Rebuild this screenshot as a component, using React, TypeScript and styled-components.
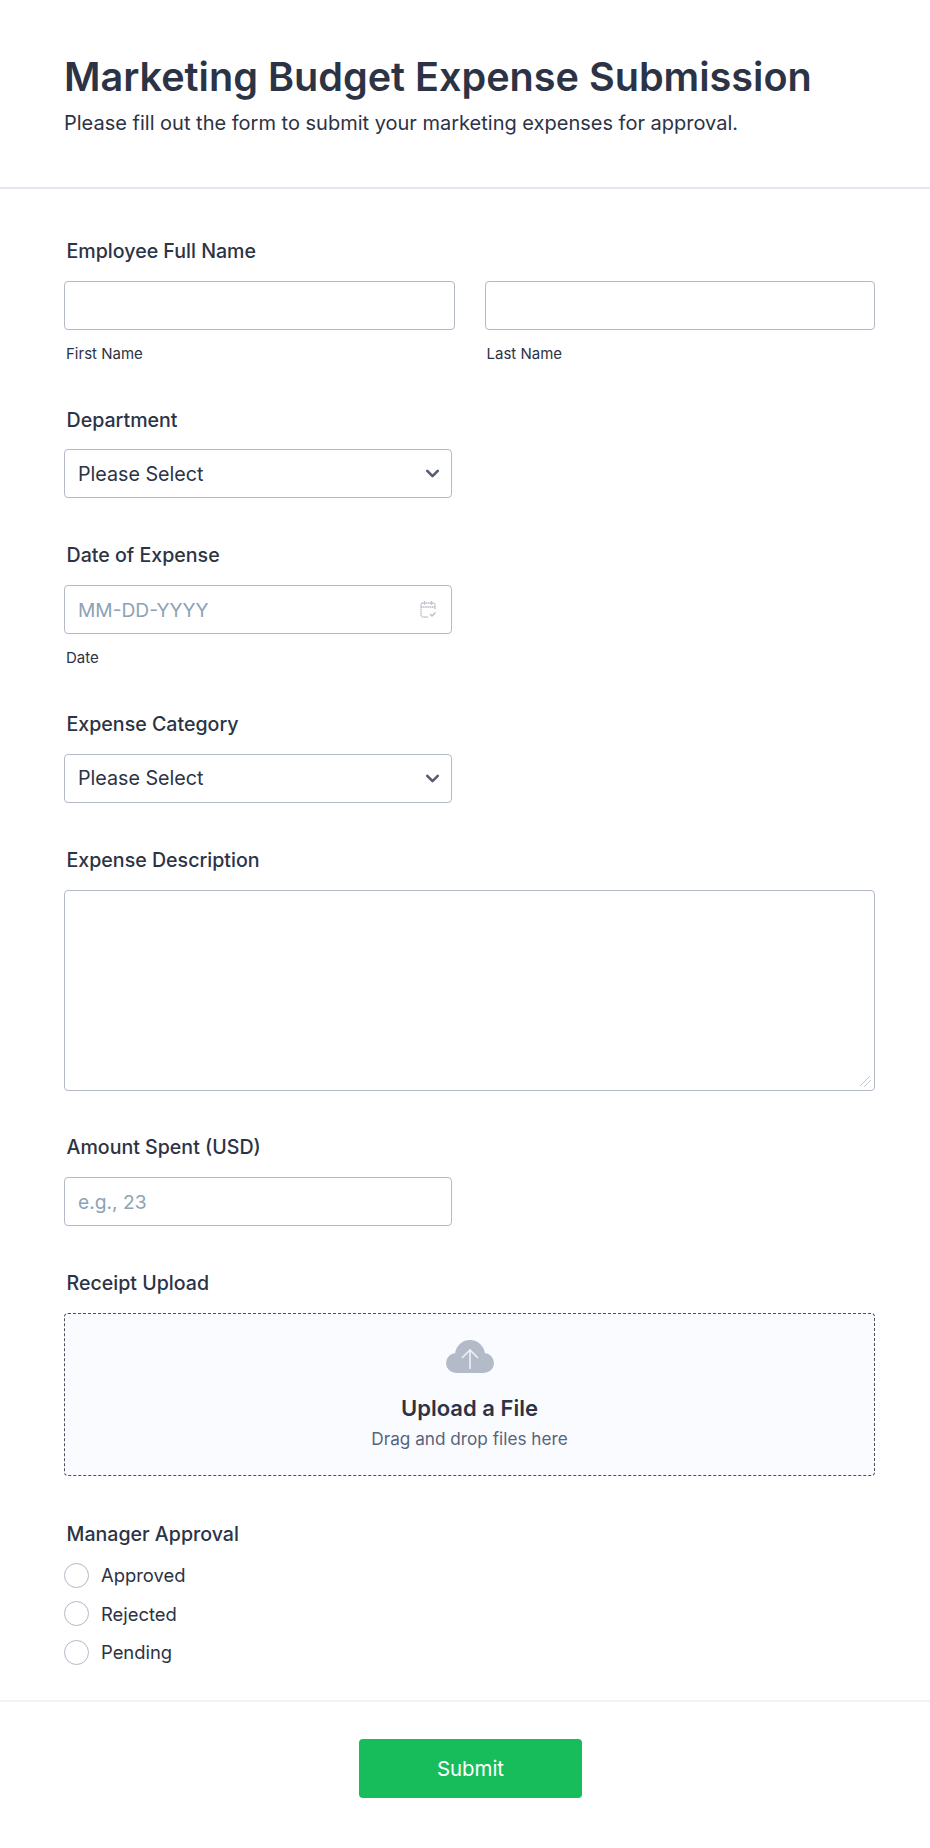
import React from 'react';
import styled, { createGlobalStyle } from 'styled-components';
import { ChevronDown } from 'lucide-react';

const GlobalStyle = createGlobalStyle`
  * {
    box-sizing: border-box;
  }

  body {
    margin: 0;
    background: #fff;
    color: #2c3345;
    font-family: Inter, "Liberation Sans", sans-serif;
  }
`;

const CalendarIcon = () => (
  <svg width="18" height="18" viewBox="0 0 18 18" fill="none" stroke="#b8bdc9" strokeWidth="1.3" strokeDasharray="1.6 0.5">
    <path d="M16 9V5a2 2 0 0 0-2-2H4a2 2 0 0 0-2 2v10a2 2 0 0 0 2 2h5" />
    <path d="M2 7h14M5.500 1v4M12.500 1v4" />
    <path d="M11 14l2 2 3.500-3.500" strokeDasharray="none" />
  </svg>
);

const CloudIcon = () => (
  <svg width="48" height="33" viewBox="0 0 48 33">
    <g fill="#b3bac8">
      <circle cx="10" cy="23" r="10" />
      <circle cx="24" cy="15" r="15" />
      <circle cx="38" cy="23" r="10" />
      <rect x="10" y="20" width="28" height="13" />
    </g>
    <path d="M24 29V10M16 18l8-8 8 8" fill="none" stroke="#eef0f5" strokeWidth="1.6" />
  </svg>
);

const App: React.FC = () => {
  return (
    <Page>
      <GlobalStyle />
      <Header>
        <Title>Marketing Budget Expense Submission</Title>
        <Subtitle>Please fill out the form to submit your marketing expenses for approval.</Subtitle>
      </Header>

      <Form>
        <Field>
          <Label>Employee Full Name</Label>
          <NameRow>
            <div>
              <TextInput type="text" />
              <SubLabel>First Name</SubLabel>
            </div>
            <div>
              <TextInput type="text" />
              <SubLabel>Last Name</SubLabel>
            </div>
          </NameRow>
        </Field>

        <Field>
          <Label>Department</Label>
          <SelectBox>
            Please Select
            <ChevronDown size={21} strokeWidth={3} color="#565c72" />
          </SelectBox>
        </Field>

        <Field>
          <Label>Date of Expense</Label>
          <ShortWrap>
            <TextInput type="text" placeholder="MM-DD-YYYY" />
            <IconSlot>
              <CalendarIcon />
            </IconSlot>
          </ShortWrap>
          <SubLabel>Date</SubLabel>
        </Field>

        <Field>
          <Label>Expense Category</Label>
          <SelectBox>
            Please Select
            <ChevronDown size={21} strokeWidth={3} color="#565c72" />
          </SelectBox>
        </Field>

        <Field>
          <Label>Expense Description</Label>
          <TextArea />
        </Field>

        <Field>
          <Label>Amount Spent (USD)</Label>
          <ShortWrap>
            <TextInput type="text" placeholder="e.g., 23" />
          </ShortWrap>
        </Field>

        <UploadField>
          <Label>Receipt Upload</Label>
          <DropZone>
            <CloudIcon />
            <DropTitle>Upload a File</DropTitle>
            <DropHint>Drag and drop files here</DropHint>
          </DropZone>
        </UploadField>

        <Field>
          <Label $tight>Manager Approval</Label>
          <RadioList>
            {['Approved', 'Rejected', 'Pending'].map((option) => (
              <RadioRow key={option}>
                <RadioDot />
                {option}
              </RadioRow>
            ))}
          </RadioList>
        </Field>
      </Form>

      <Footer>
        <SubmitButton type="button">Submit</SubmitButton>
      </Footer>
    </Page>
  );
};

const Page = styled.div`
  width: 930px;
  height: 1848px;
  overflow: hidden;
  background: #fff;
`;

const Header = styled.header`
  height: 189px;
  padding: 53px 64px 0;
  border-bottom: 2px solid #e6e8f0;
`;

const Title = styled.h1`
  margin: 0;
  font-size: 39.6px;
  line-height: 48px;
  font-weight: 600;
  color: #2c3345;
`;

const Subtitle = styled.p`
  margin: 10px 0 0;
  font-size: 20px;
  line-height: 24px;
  color: #2c3345;
`;

const Form = styled.main`
  padding: 50px 64px 0;
`;

const Field = styled.section`
  margin-bottom: 44.9px;
`;

const UploadField = styled(Field)`
  margin-bottom: 46px;
`;

const Label = styled.label<{ $tight?: boolean }>`
  display: block;
  margin: 0 0 ${(p) => (p.$tight ? '17px' : '17.8px')} 2.5px;
  font-size: 19.6px;
  line-height: 24px;
  font-weight: 500;
  color: #2c3345;
`;

const NameRow = styled.div`
  display: grid;
  grid-template-columns: 390.5px 390.5px;
  gap: 30px;
`;

const SubLabel = styled.div`
  margin: 15px 0 0 2px;
  font-size: 15px;
  line-height: 18px;
  color: #2c3345;
`;

const TextInput = styled.input`
  display: block;
  width: 100%;
  height: 49px;
  padding: 0 13px;
  background: #fff;
  border: 1px solid #b4b9c7;
  border-radius: 4px;
  font-family: inherit;
  font-size: 19.2px;
  color: #2c3345;

  &::placeholder {
    color: #8ca2b5;
    opacity: 1;
  }
`;

const SelectBox = styled.div`
  display: flex;
  align-items: center;
  justify-content: space-between;
  width: 388px;
  height: 49px;
  padding: 0 8px 0 13px;
  border: 1px solid #b4b9c7;
  border-radius: 4px;
  font-size: 19.7px;
  color: #2c3345;
`;

const ShortWrap = styled.div`
  position: relative;
  width: 388px;
`;

const IconSlot = styled.span`
  position: absolute;
  top: 15px;
  right: 15px;
  display: flex;
`;

const TextArea = styled.textarea`
  display: block;
  width: 811px;
  height: 201px;
  padding: 10px 12px;
  border: 1px solid #b4b9c7;
  border-radius: 4px;
  background: #fff;
  font-family: inherit;
  font-size: 18px;

  &::-webkit-resizer {
    background: linear-gradient(
        135deg,
        transparent 43%,
        #c6cad5 43% 49%,
        transparent 49% 66%,
        #c6cad5 66% 72%,
        transparent 72%
      )
      1px 1px / 11px 11px no-repeat;
  }
`;

const DropZone = styled.div`
  display: flex;
  flex-direction: column;
  align-items: center;
  width: 811px;
  height: 163px;
  padding-top: 26px;
  background: #fafbff;
  border: 1px dashed #4a4f5e;
  border-radius: 4px;
`;

const DropTitle = styled.div`
  margin-top: 21px;
  font-size: 22px;
  line-height: 28px;
  font-weight: 600;
  color: #2c3345;
`;

const DropHint = styled.div`
  margin-top: 6px;
  font-size: 17.2px;
  line-height: 22px;
  color: #57647e;
`;

const RadioList = styled.div`
  display: flex;
  flex-direction: column;
  gap: 13.4px;
`;

const RadioRow = styled.div`
  display: flex;
  align-items: center;
  gap: 12px;
  height: 25px;
  font-size: 18.4px;
  color: #2c3345;
`;

const RadioDot = styled.span`
  width: 25px;
  height: 25px;
  border: 1px solid #b4b9c7;
  border-radius: 50%;
  background: #fff;
`;

const Footer = styled.footer`
  display: flex;
  justify-content: center;
  margin-top: -10px;
  padding: 37px 0 0 11px;
  border-top: 2px solid #f1f1f8;
`;

const SubmitButton = styled.button`
  width: 223px;
  height: 59px;
  border: 0;
  border-radius: 4px;
  background: #18bd5b;
  color: #fff;
  font-family: inherit;
  font-size: 20.4px;
  font-weight: 400;
`;

export default App;
